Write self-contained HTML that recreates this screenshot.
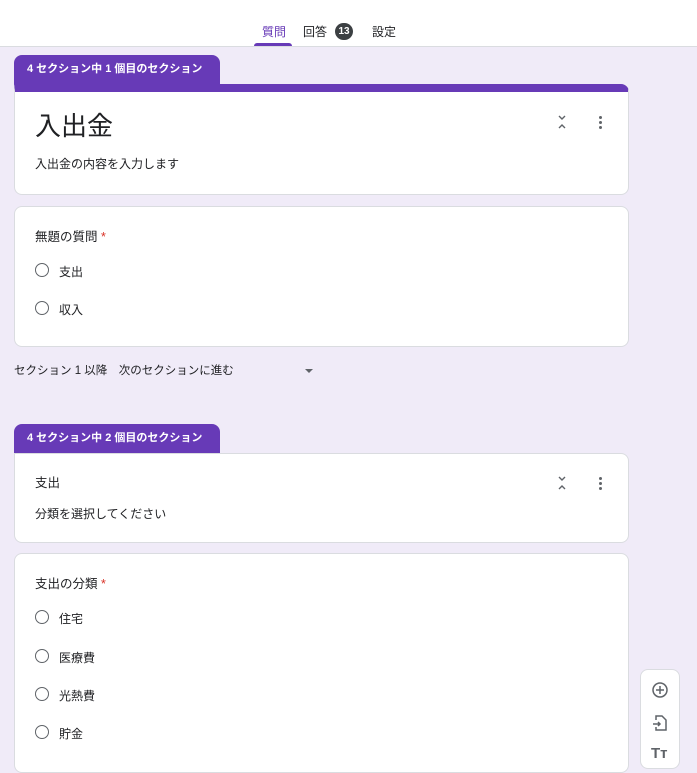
<!DOCTYPE html><html><head><meta charset="utf-8"><style>
body{margin:0;width:697px;height:758px;overflow:hidden;background:#f0ebf8;font-family:"Liberation Sans","Noto Sans CJK JP",sans-serif;color:#202124;position:relative}
.hdr{position:absolute;left:0;top:0;width:697px;height:46px;background:#fff;border-bottom:1px solid #dadce0}
.t{position:absolute;top:23px;font-size:12px;color:#202124}
.a{position:absolute}
.tab{position:absolute;left:14px;width:206px;height:30px;background:#673ab7;border-radius:8px 8px 0 0;color:#fff;font-size:11px;font-weight:bold;line-height:29px;padding-left:13px;box-sizing:border-box}
.card{position:absolute;left:14px;width:615px;background:#fff;border-radius:8px;border:1px solid #dadce0;box-sizing:border-box}
.top{border-top:8px solid #673ab7;border-radius:0 8px 8px 8px}
.r{position:absolute;left:20px;width:14px;height:14px;border:1.5px solid #5f6368;border-radius:50%;box-sizing:border-box}
.rl{position:absolute;left:44px;font-size:12px}
.dots{position:absolute;width:4px}
.dots i{display:block;width:3px;height:3px;background:#5f6368;border-radius:50%;margin-bottom:2px}
</style></head><body>
<div class="hdr">
<div class="t" style="left:262px;color:#673ab7">質問</div>
<div class="a" style="left:254px;top:43px;width:38px;height:3px;background:#673ab7;border-radius:3px 3px 0 0"></div>
<div class="t" style="left:303px">回答</div>
<div class="a" style="left:335px;top:23px;width:18px;height:17px;border-radius:9px;background:#3c4043;color:#fff;font-size:10px;font-weight:bold;text-align:center;line-height:17px">13</div>
<div class="t" style="left:372px">設定</div>
</div>
<div class="tab" style="top:55px">4 セクション中 1 個目のセクション</div>
<div class="card top" style="top:84px;height:111px">
<div class="a" style="left:20px;top:14px;font-size:26px">入出金</div>
<div class="a" style="left:20px;top:63px;font-size:12px">入出金の内容を入力します</div>
<svg class="a" style="left:542px;top:23px" width="10" height="14" viewBox="0 0 10 14" fill="none" stroke="#5f6368" stroke-width="1.4"><path d="M2 1l3 3 3-3M2 13l3-3 3 3"/></svg>
<div class="dots" style="left:584px;top:24px"><i></i><i></i><i></i></div>
</div>
<div class="card" style="top:206px;height:141px">
<div class="a" style="left:20px;top:19px;font-size:12.5px">無題の質問 <span style="color:#d93025">*</span></div>
<div class="r" style="top:56px"></div><div class="rl" style="top:56px">支出</div>
<div class="r" style="top:94px"></div><div class="rl" style="top:94px">収入</div>
</div>
<div class="a" style="left:14px;top:362px;font-size:11.5px">セクション 1 以降　次のセクションに進む</div>
<div class="a" style="left:305px;top:369px;border:4px solid transparent;border-top:4px solid #5f6368"></div>
<div class="tab" style="top:424px">4 セクション中 2 個目のセクション</div>
<div class="card" style="top:453px;height:90px;border-radius:0 8px 8px 8px">
<div class="a" style="left:20px;top:18px;font-size:12.5px">支出</div>
<div class="a" style="left:20px;top:51px;font-size:12px">分類を選択してください</div>
<svg class="a" style="left:542px;top:22px" width="10" height="14" viewBox="0 0 10 14" fill="none" stroke="#5f6368" stroke-width="1.4"><path d="M2 1l3 3 3-3M2 13l3-3 3 3"/></svg>
<div class="dots" style="left:584px;top:23px"><i></i><i></i><i></i></div>
</div>
<div class="card" style="top:553px;height:220px">
<div class="a" style="left:20px;top:19px;font-size:12.5px">支出の分類 <span style="color:#d93025">*</span></div>
<div class="r" style="top:56px"></div><div class="rl" style="top:56px">住宅</div>
<div class="r" style="top:95px"></div><div class="rl" style="top:95px">医療費</div>
<div class="r" style="top:133px"></div><div class="rl" style="top:133px">光熱費</div>
<div class="r" style="top:171px"></div><div class="rl" style="top:171px">貯金</div>
</div>
<div class="a" style="left:640px;top:669px;width:40px;height:100px;background:#fff;border-radius:8px;border:1px solid #dadce0;box-sizing:border-box">
<svg class="a" style="left:10px;top:11px" width="18" height="18" viewBox="0 0 18 18" fill="none" stroke="#5f6368" stroke-width="1.5"><circle cx="9" cy="9" r="7"/><path d="M9 5v8M5 9h8"/></svg>
<svg class="a" style="left:10px;top:44px" width="18" height="18" viewBox="0 0 18 18" fill="none" stroke="#5f6368" stroke-width="1.5"><path d="M5 6V2h6l4 4v10H5v-3"/><path d="M2 10h7M7 8l2 2-2 2"/></svg>
<div class="a" style="left:10px;top:75px;font-size:15px;font-weight:bold;color:#5f6368">Tт</div>
</div>
</body></html>
